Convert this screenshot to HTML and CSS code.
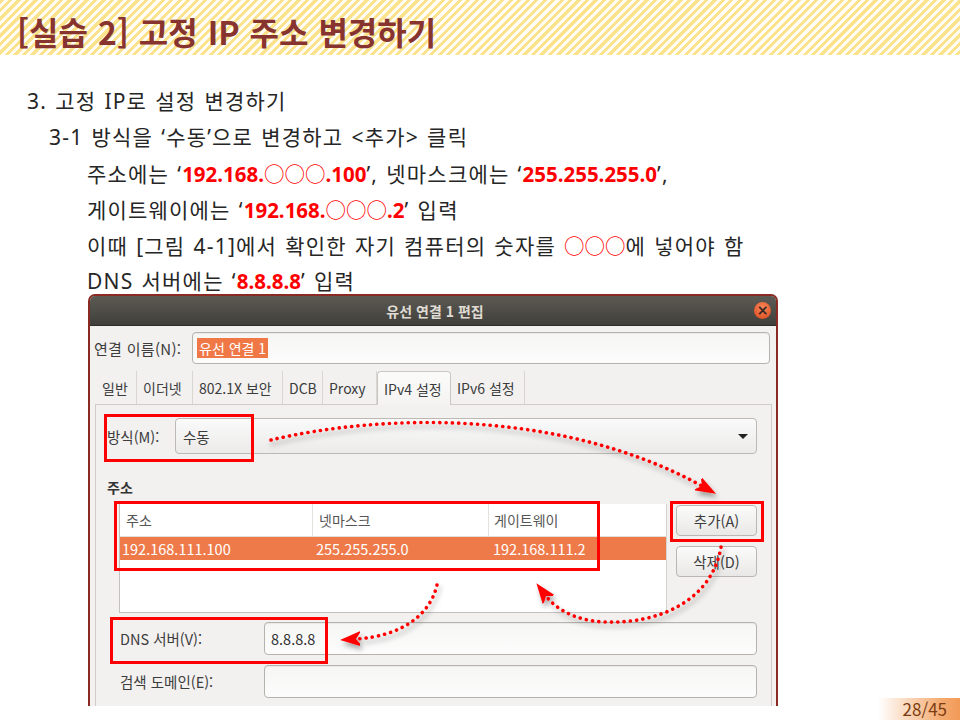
FILE: index.html
```html
<!DOCTYPE html>
<html lang="ko">
<head>
<meta charset="utf-8">
<title>[실습 2] 고정 IP 주소 변경하기</title>
<link rel="stylesheet" href="styles.css">
</head>
<body>
<div class="slide">
  <header class="title-band"><h1>[실습 2] 고정 IP 주소 변경하기</h1></header>
  <div class="content">
    <p class="line l1">3. 고정 IP로 설정 변경하기</p>
    <p class="line l2">3-1 방식을 ‘수동’으로 변경하고 &lt;추가&gt; 클릭</p>
    <p class="line l3">주소에는 ‘<b class="red">192.168.<span class="circ">○○○</span>.100</b>’, 넷마스크에는 ‘<b class="red">255.255.255.0</b>’,</p>
    <p class="line l3">게이트웨이에는 ‘<b class="red">192.168.<span class="circ">○○○</span>.2</b>’ 입력</p>
    <p class="line l3">이때 [그림 4-1]에서 확인한 자기 컴퓨터의 숫자를 <span class="circ red">○○○</span>에 넣어야 함</p>
    <p class="line l3">DNS 서버에는 ‘<b class="red">8.8.8.8</b>’ 입력</p>
  </div>
  <div class="dialog">
    <div class="titlebar">
      <span class="dtitle">유선 연결 1 편집</span>
      <span class="close">×</span>
    </div>
    <div class="dbody">
      <div class="name-row">
        <span class="lbl name-lbl">연결 이름(N):</span>
        <div class="entry name-entry"><span class="sel-text">유선 연결 1</span></div>
      </div>
      <div class="tabs">
        <span class="tab">일반</span>
        <span class="tab">이더넷</span>
        <span class="tab">802.1X 보안</span>
        <span class="tab">DCB</span>
        <span class="tab">Proxy</span>
        <span class="tab active">IPv4 설정</span>
        <span class="tab">IPv6 설정</span>
      </div>
      <div class="panel">
        <div class="method-row">
          <span class="lbl method-lbl">방식(M):</span>
          <div class="combo"><span>수동</span><span class="caret"></span></div>
        </div>
        <div class="section">주소</div>
        <div class="addr">
          <div class="table">
            <div class="trow thead"><span class="c1">주소</span><span class="c2">넷마스크</span><span class="c3">게이트웨이</span></div>
            <div class="trow tsel"><span class="c1">192.168.111.100</span><span class="c2">255.255.255.0</span><span class="c3">192.168.111.2</span></div>
          </div>
          <div class="btns">
            <span class="btn">추가(A)</span>
            <span class="btn">삭제(D)</span>
          </div>
        </div>
        <div class="field-row dns-row">
          <span class="lbl field-lbl">DNS 서버(V):</span>
          <div class="entry field-entry">8.8.8.8</div>
        </div>
        <div class="field-row">
          <span class="lbl field-lbl">검색 도메인(E):</span>
          <div class="entry field-entry"></div>
        </div>
      </div>
    </div>
    <span class="hl hl-method"></span>
    <span class="hl hl-table"></span>
    <span class="hl hl-add"></span>
    <span class="hl hl-dns"></span>
  </div>
  <svg class="arrows" width="960" height="720" viewBox="0 0 960 720" xmlns="http://www.w3.org/2000/svg">
    <defs>
      <filter id="sh" x="-20%" y="-20%" width="140%" height="140%">
        <feDropShadow dx="2" dy="4" stdDeviation="2.5" flood-color="#000" flood-opacity="0.35"/>
      </filter>
      <marker id="head" markerUnits="userSpaceOnUse" markerWidth="20" markerHeight="20" refX="4" refY="10" orient="auto">
        <path d="M0,10 L-6,2 L16,10 L-6,18 Z" fill="#ff0000" transform="translate(4,0)"/>
      </marker>
    </defs>
    <g filter="url(#sh)" fill="none" stroke="#ff0000" stroke-width="3.6" stroke-linecap="round" stroke-dasharray="0.1 6.2">
      <path d="M271,440 C380,414 560,408 702,486" marker-end="url(#head)"/>
      <path d="M721,547 C712,600 660,624 605,622 C575,621 555,608 546,596" marker-end="url(#head)"/>
      <path d="M437,585 C430,615 402,636 356,639" marker-end="url(#head)"/>
    </g>
  </svg>
  <div class="pageno">28/45</div>
</div>
</body>
</html>
```
FILE: styles.css
```css
* { box-sizing: border-box; margin: 0; padding: 0; }
html, body { width: 960px; height: 720px; overflow: hidden; background: #fff; }
body { font-family: "Noto Sans CJK KR", "Noto Sans", sans-serif; color: #262626; }

.slide { position: relative; width: 960px; height: 720px; overflow: hidden; }

.title-band {
  height: 55px;
  padding-left: 17px;
  background: repeating-linear-gradient(135deg, #fbe38d 0 3px, #fffdf6 3px 6px);
}
.title-band h1 {
  font-family: "Noto Sans CJK KR", sans-serif;
  font-size: 32px;
  font-weight: 700;
  color: #873430;
  line-height: 62px;
  height: 55px;
  word-spacing: 1px;
  white-space: nowrap;
}

.content { padding-top: 28px; }
.line {
  font-family: "Noto Sans", "Noto Sans CJK KR", sans-serif;
  font-size: 21px;
  line-height: 36px;
  height: 36px;
  letter-spacing: 1.2px;
  word-spacing: 1.5px;
  white-space: nowrap;
  color: #262626;
}
.l1 { padding-left: 27px; }
.l2 { padding-left: 49px; }
.l3 { padding-left: 87px; }
.red { color: #ff0000; }
b.red { font-weight: 700; font-size: 20.5px; letter-spacing: 0; }
.circ { font-family: "Noto Sans CJK KR", sans-serif; font-weight: 400; font-size: 20.5px; letter-spacing: 0; color: #ff0000; }

/* dialog */
.dialog {
  position: relative;
  margin: -5px 0 0 88px;
  width: 690px;
  height: 412px;
  border: 2px solid #8a2a22;
  border-bottom: none;
  border-radius: 7px 7px 0 0;
  background: #f2f1f0;
  overflow: hidden;
  font-family: "Noto Sans CJK KR", sans-serif;
  font-size: 14px;
  color: #3c3c3c;
}
.titlebar {
  height: 30px;
  display: flex;
  align-items: center;
  justify-content: center;
  position: relative;
  background: linear-gradient(#5d5a54, #403f3b);
  border-bottom: 1px solid #2e2d2a;
}
.dtitle { color: #dfdbd2; font-weight: 700; font-size: 14px; margin-left: 4px; }
.close {
  position: absolute;
  right: 5px;
  top: 6px;
  width: 17px;
  height: 17px;
  border-radius: 50%;
  background: radial-gradient(circle at 50% 35%, #f7885c, #e25a2c 70%, #c9471f);
  color: #3a2620;
  font-size: 14px;
  line-height: 16px;
  text-align: center;
  font-family: "DejaVu Sans", sans-serif;
  font-weight: 700;
}

.dbody { padding: 6px 4px 0 5px; }
.lbl { color: #3c3c3c; white-space: nowrap; }

.name-row { display: flex; align-items: center; height: 32px; padding-right: 2px; }
.name-lbl { width: 98px; margin-left: -1px; font-size: 15px; letter-spacing: 0.3px; }
.entry {
  border: 1px solid #b6b3ae;
  border-radius: 4px;
  background: linear-gradient(#f6f6f5, #fcfcfc);
  box-shadow: inset 0 1px 1px rgba(0,0,0,0.06);
}
.name-entry { flex: 1; height: 32px; padding: 6px 4px; display: flex; align-items: center; }
.sel-text { background: #f07746; color: #fff; padding: 0 2px; line-height: 20px; font-size: 14px; }

.tabs { display: flex; height: 33px; margin-top: 7px; padding-left: 1px; align-items: stretch; }
.tab {
  display: flex;
  align-items: center;
  padding: 0 6px;
  font-size: 14px;
  border-right: 1px solid #d9d6d2;
  color: #3c3c3c;
  white-space: nowrap;
}
.tab:nth-child(1) { width: 41px; }
.tab:nth-child(2) { width: 56px; }
.tab:nth-child(3) { width: 90px; }
.tab:nth-child(4) { width: 40px; }
.tab:nth-child(5) { width: 54px; }
.tab:nth-child(6) { width: 74px; }
.tab:nth-child(7) { width: 74px; }
.tab.active {
  background: linear-gradient(#fbfbfa, #f4f3f2);
  border: 1px solid #cac7c3;
  border-bottom: none;
  border-radius: 4px 4px 0 0;
  margin-bottom: -1px;
  position: relative;
  z-index: 1;
}

.panel {
  border: 1px solid #d0cdc9;
  background: #f2f1f0;
  height: 320px;
  padding: 13px 14px 0 11px;
}
.method-row { display: flex; align-items: center; height: 36px; }
.method-lbl { width: 68px; font-size: 14.5px; }
.combo {
  flex: 1;
  height: 36px;
  border: 1px solid #bcb9b4;
  border-radius: 4px;
  background: linear-gradient(#fafafa, #ecebe9);
  display: flex;
  align-items: center;
  justify-content: space-between;
  padding: 0 8px 0 7px;
  font-size: 14.5px;
}
.caret {
  width: 0; height: 0;
  border-left: 5px solid transparent;
  border-right: 5px solid transparent;
  border-top: 5px solid #222;
}
.section { margin-top: 23px; font-weight: 700; font-size: 14px; line-height: 20px; color: #333; }

.addr { display: flex; gap: 9px; margin-top: 7px; padding-left: 12px; }
.table {
  width: 548px;
  height: 109px;
  background: #fff;
  border: 1px solid #c4c1bd;
  border-top: none;
  border-right: 1px solid #d6d3cf;
}
.trow { display: flex; }
.trow span { white-space: nowrap; padding-left: 6px; }
.c1 { width: 193px; }
.c2 { width: 176px; }
.c3 { flex: 1; }
.thead { height: 33px; align-items: center; border-bottom: 1px solid #e2e0dd; color: #555; font-size: 14px; }
.thead .c1, .thead .c2 { border-right: 1px solid #e4e2df; height: 100%; display: flex; align-items: center; }
.thead .c3 { padding-left: 5px; }
.tsel { height: 23px; align-items: center; background: #ef7a49; color: #fff; font-size: 14.5px; }
.tsel .c1 { padding-left: 2px; }
.tsel .c2 { padding-left: 3px; }
.tsel .c3 { padding-left: 4px; }

.btns { display: flex; flex-direction: column; gap: 10px; margin-top: 1px; }
.btn {
  width: 81px;
  height: 31px;
  border: 1px solid #bab7b2;
  border-radius: 4px;
  background: linear-gradient(#fbfbfb, #e9e8e6);
  display: flex;
  align-items: center;
  justify-content: center;
  font-size: 14.5px;
  color: #3c3c3c;
}

.field-row { display: flex; align-items: center; height: 33px; padding-left: 13px; margin-top: 10px; }
.dns-row { margin-top: 9px; }
.field-lbl { width: 144px; font-size: 14.5px; }
.field-entry { flex: 1; height: 33px; padding: 0 6px; display: flex; align-items: center; font-size: 14.5px; color: #333; }

.hl { position: absolute; border: 3px solid #ff0000; }
.hl-method { left: 14px; top: 118px; width: 150px; height: 48px; }
.hl-table { left: 24px; top: 205px; width: 486px; height: 70px; }
.hl-add { left: 580px; top: 205px; width: 94px; height: 41px; }
.hl-dns { left: 20px; top: 321px; width: 218px; height: 47px; }

.arrows { position: absolute; left: 0; top: 0; pointer-events: none; }

.pageno {
  position: absolute;
  right: 0;
  bottom: 0;
  width: 82px;
  height: 22px;
  padding-right: 13px;
  text-align: right;
  font-size: 17px;
  line-height: 22px;
  color: #7c3d12;
  background: linear-gradient(90deg, rgba(246,170,110,0), #f4a86c 80%, #f29a58);
}
```
